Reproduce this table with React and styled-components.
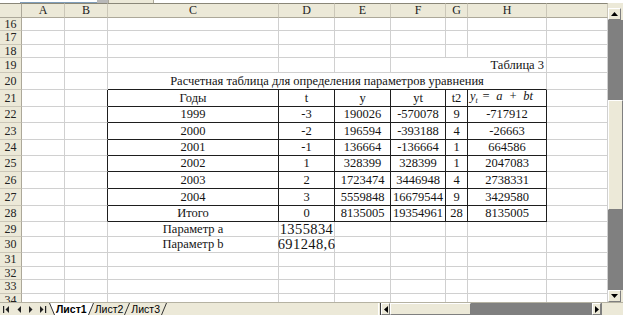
import React from 'react'
import styled, { createGlobalStyle } from 'styled-components'

const GlobalStyle = createGlobalStyle`
  html, body {
    margin: 0;
    padding: 0;
    background: #fff;
    overflow: hidden;
  }
`

const COLS = [22, 43, 43, 171, 56, 56, 55, 22, 79, 61]
const LETTERS = ['A', 'B', 'C', 'D', 'E', 'F', 'G', 'H', '']
const ROW_NUMS = [16, 17, 18, 19, 20, 21, 22, 23, 24, 25, 26, 27, 28, 29, 30, 31, 32, 33, 34]
const ROW_H = [13, 14, 13, 15, 17, 17, 16, 17, 16, 16, 17, 17, 16, 15, 16, 14, 13, 14, 14]

const FORMULA = 'formula'

const TABLE = [
  ['Годы', 't', 'y', 'yt', 't2', FORMULA],
  ['1999', '-3', '190026', '-570078', '9', '-717912'],
  ['2000', '-2', '196594', '-393188', '4', '-26663'],
  ['2001', '-1', '136664', '-136664', '1', '664586'],
  ['2002', '1', '328399', '328399', '1', '2047083'],
  ['2003', '2', '1723474', '3446948', '4', '2738331'],
  ['2004', '3', '5559848', '16679544', '9', '3429580'],
  ['Итого', '0', '8135005', '19354961', '28', '8135005'],
]

const PARAMS = {
  29: ['Параметр a', '1355834'],
  30: ['Параметр b', '691248,6'],
}

const Window = styled.div`
  width: 623px;
  height: 315px;
  display: flex;
  flex-direction: column;
  overflow: hidden;
  background: #fff;
`

const TopStrip = styled.div`
  display: flex;
  height: 3px;
  background: #fff;
`

const NameBox = styled.div`
  width: 77px;
  margin-left: 20px;
  border-bottom: 1px solid #7f9db9;
`

const NameDrop = styled.div`
  width: 11px;
  background: #b8b8b8;
`

const FxBox = styled.div`
  width: 44px;
  background: #ece9d8;
  border-left: 1px solid #aca899;
  border-right: 1px solid #aca899;
`

const Body = styled.div`
  display: flex;
  height: 299px;
`

const Sheet = styled.div`
  display: grid;
  grid-template-columns: ${COLS.map((w) => `${w}px`).join(' ')};
  grid-template-rows: 15px ${ROW_H.map((h) => `${h}px`).join(' ')};
  width: 608px;
  height: 299px;
  overflow: hidden;
  background: #fff;
  font-family: 'Liberation Serif', 'Times New Roman', serif;
  color: #141414;
`

const Corner = styled.div`
  background: #ece9d8;
  border-top: 1px solid #8a8778;
  border-right: 1px solid #aca899;
  border-bottom: 1px solid #aca899;
`

const ColHead = styled.div`
  display: flex;
  align-items: center;
  justify-content: center;
  background: #ece9d8;
  border-top: 1px solid #8a8778;
  border-right: 1px solid #cbc7b8;
  border-bottom: 1px solid #aca899;
  font-size: 12px;
  color: #222;
`

const RowHead = styled.div`
  display: flex;
  align-items: center;
  justify-content: center;
  background: #ece9d8;
  border-right: 1px solid #aca899;
  border-bottom: 1px solid #cbc7b8;
  font-size: 12px;
  color: #222;
  overflow: hidden;
`

const Cell = styled.div`
  grid-column: span ${(p) => p.$span || 1};
  display: flex;
  align-items: center;
  justify-content: ${(p) =>
    p.$align === 'right' ? 'flex-end' : p.$align === 'left' ? 'flex-start' : 'center'};
  padding: 0 2px;
  min-width: 0;
  border-right: 1px solid ${(p) => (p.$darkRight ? '#1e1e1e' : '#d0d0d0')};
  border-bottom: 1px solid ${(p) => (p.$darkBottom ? '#1e1e1e' : '#d0d0d0')};
  font-size: ${(p) => (p.$wide ? '14.5px' : '12.5px')};
  letter-spacing: ${(p) => (p.$wide ? '0.4px' : 'normal')};
  white-space: nowrap;
  overflow: visible;
`

const Formula = styled.span`
  font-style: italic;
  font-size: 12.5px;
  word-spacing: 3px;
  margin-top: -2px;

  sub {
    font-size: 8px;
    margin-right: 4px;
  }
`

const VScroll = styled.div`
  width: 15px;
  display: flex;
  flex-direction: column;
  background: #ece9d8;
`

const ScrollGap = styled.div`
  height: 5px;
`

const ArrowButton = styled.div`
  display: flex;
  align-items: center;
  justify-content: center;
  width: ${(p) => p.$w || 13}px;
  height: ${(p) => p.$h || 12}px;
  box-sizing: border-box;
  background: #ece9d8;
  border: 1px solid;
  border-color: #fff #7f7f7f #7f7f7f #fff;
  flex-shrink: 0;
`

const Track = styled.div`
  flex: ${(p) => (p.$size ? `0 0 ${p.$size}px` : 1)};
  background: #808080;
`

const Thumb = styled.div`
  flex: 0 0 ${(p) => p.$size}px;
  box-sizing: border-box;
  background: #ece9d8;
  border: 1px solid;
  border-color: #fff #7f7f7f #7f7f7f #fff;
`

const TabBar = styled.div`
  display: flex;
  height: 13px;
  background: #ece9d8;
  font-family: 'Liberation Sans', Arial, sans-serif;
  border-top: 1px solid #b5b2a2;
  box-sizing: border-box;
`

const NavGroup = styled.div`
  display: flex;
  align-items: center;
  gap: 4px;
  width: 46px;
  padding-left: 3px;
`

const Tabs = styled.div`
  display: flex;
  align-items: stretch;
`

const SheetTab = styled.div`
  display: flex;
  align-items: center;
  padding: 0 1px;
  font-size: 10.5px;
  line-height: 11px;
  height: 12px;
  font-weight: ${(p) => (p.$active ? 700 : 400)};
  background: ${(p) => (p.$active ? '#fff' : 'transparent')};
  color: #000;
`

const Spacer = styled.div`
  flex: 1;
`

const Splitter = styled.div`
  width: 3px;
  border-left: 1px solid #fff;
  border-right: 1px solid #404040;
  box-sizing: border-box;
`

const HScroll = styled.div`
  display: flex;
  width: 220px;
`

const ScrollCorner = styled.div`
  width: 22px;
  background: #ece9d8;
  border-left: 1px solid #7f7f7f;
  box-sizing: border-box;
`

const Arrow = ({ dir }) => {
  const pts = {
    up: '0,4 3.5,0 7,4',
    down: '0,0 3.5,4 7,0',
    left: '4,0 0,3.5 4,7',
    right: '0,0 4,3.5 0,7',
  }[dir]
  const vertical = dir === 'up' || dir === 'down'
  return (
    <svg width={vertical ? 7 : 4} height={vertical ? 4 : 7} viewBox={vertical ? '0 0 7 4' : '0 0 4 7'}>
      <polygon points={pts} fill="#000" />
    </svg>
  )
}

const NavIcon = ({ kind }) => (
  <svg width="8" height="7" viewBox="0 0 8 7">
    {kind === 'first' && (
      <>
        <rect x="0" y="0" width="1.2" height="7" fill="#222" />
        <polygon points="6,0 2.5,3.5 6,7" fill="#222" />
      </>
    )}
    {kind === 'prev' && <polygon points="6,0 2.5,3.5 6,7" fill="#222" />}
    {kind === 'next' && <polygon points="2,0 5.5,3.5 2,7" fill="#222" />}
    {kind === 'last' && (
      <>
        <polygon points="1,0 4.5,3.5 1,7" fill="#222" />
        <rect x="6" y="0" width="1.2" height="7" fill="#222" />
      </>
    )}
  </svg>
)

const Slant = ({ back, fillLeft, fillRight }) => (
  <svg width="6" height="12" viewBox="0 0 6 12">
    {fillLeft && <polygon points={back ? '0,0 0,12 6,12' : '0,0 0,12 6,0'} fill="#fff" />}
    {fillRight && <polygon points={back ? '0,0 6,0 6,12' : '6,0 6,12 0,12'} fill="#fff" />}
    <line
      x1={back ? 0.5 : 5.5}
      y1="0"
      x2={back ? 5.5 : 0.5}
      y2="12"
      stroke="#333"
      strokeWidth="1"
    />
  </svg>
)

const blank = () => ({})

function cellsFor(num) {
  const base = Array.from({ length: 9 }, blank)

  if (num === 19) {
    return [
      base[0], base[1], base[2], base[3], base[4],
      { span: 3, text: 'Таблица 3', align: 'right' },
      base[8],
    ]
  }

  if (num === 20) {
    return [
      base[0], base[1],
      {
        span: 6,
        text: 'Расчетная таблица для определения параметров уравнения',
        darkBottom: true,
      },
      base[8],
    ]
  }

  if (num >= 21 && num <= 28) {
    const data = TABLE[num - 21]
    return [
      base[0],
      { darkRight: true },
      ...data.map((text) => ({
        text,
        darkRight: true,
        darkBottom: true,
        align: text === FORMULA ? 'left' : 'center',
      })),
      base[8],
    ]
  }

  if (PARAMS[num]) {
    const [label, value] = PARAMS[num]
    base[2] = { text: label }
    base[3] = { text: value, wide: true }
    return base
  }

  return base
}

const renderText = (text) => {
  if (text === FORMULA) {
    return (
      <Formula>
        y<sub>t</sub>= a + bt
      </Formula>
    )
  }
  return text
}

export default function App() {
  return (
    <Window>
      <GlobalStyle />
      <TopStrip>
        <NameBox />
        <NameDrop />
        <FxBox />
      </TopStrip>

      <Body>
        <Sheet>
          <Corner />
          {LETTERS.map((l, i) => (
            <ColHead key={`h${i}`}>{l}</ColHead>
          ))}

          {ROW_NUMS.map((num) => (
            <React.Fragment key={num}>
              <RowHead>{num}</RowHead>
              {cellsFor(num).map((c, i) => (
                <Cell
                  key={`${num}-${i}`}
                  $span={c.span}
                  $align={c.align}
                  $darkRight={c.darkRight}
                  $darkBottom={c.darkBottom}
                  $wide={c.wide}
                >
                  {c.text ? renderText(c.text) : null}
                </Cell>
              ))}
            </React.Fragment>
          ))}
        </Sheet>

        <VScroll>
          <ScrollGap />
          <ArrowButton>
            <Arrow dir="up" />
          </ArrowButton>
          <Track $size={80} />
          <Thumb $size={110} />
          <Track />
          <ArrowButton>
            <Arrow dir="down" />
          </ArrowButton>
        </VScroll>
      </Body>

      <TabBar>
        <NavGroup>
          <NavIcon kind="first" />
          <NavIcon kind="prev" />
          <NavIcon kind="next" />
          <NavIcon kind="last" />
        </NavGroup>
        <Tabs>
          <Slant back fillRight />
          <SheetTab $active>Лист1</SheetTab>
          <Slant fillLeft />
          <SheetTab>Лист2</SheetTab>
          <Slant />
          <SheetTab>Лист3</SheetTab>
          <Slant />
        </Tabs>
        <Spacer />
        <Splitter />
        <HScroll>
          <ArrowButton $w={9} $h={12}>
            <Arrow dir="left" />
          </ArrowButton>
          <Thumb $size={81} />
          <Track />
          <ArrowButton $w={9} $h={12}>
            <Arrow dir="right" />
          </ArrowButton>
        </HScroll>
        <ScrollCorner />
      </TabBar>
    </Window>
  )
}
